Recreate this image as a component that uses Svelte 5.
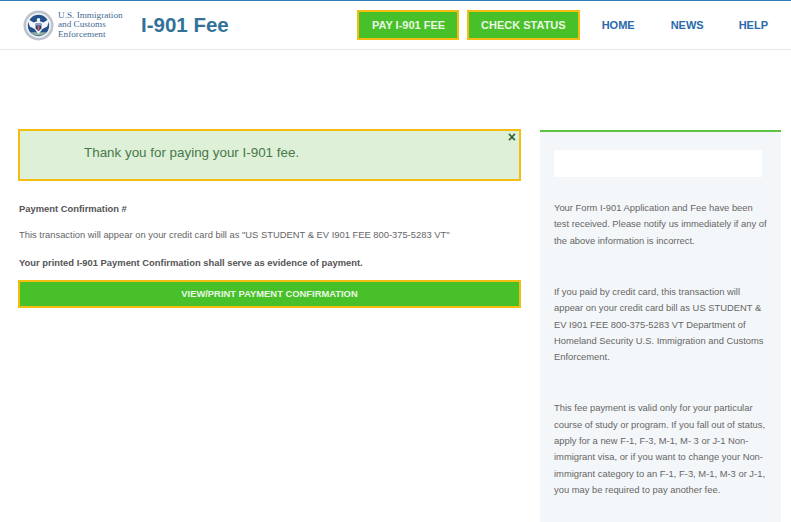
<script>
  const nav = ["HOME", "NEWS", "HELP"];
  const notes = [
    [
      "Your Form I-901 Application and Fee have been",
      "test received. Please notify us immediately if any of",
      "the above information is incorrect."
    ],
    [
      "If you paid by credit card, this transaction will",
      "appear on your credit card bill as US STUDENT &",
      "EV I901 FEE 800-375-5283 VT Department of",
      "Homeland Security U.S. Immigration and Customs",
      "Enforcement."
    ],
    [
      "This fee payment is valid only for your particular",
      "course of study or program. If you fall out of status,",
      "apply for a new F-1, F-3, M-1, M- 3 or J-1 Non-",
      "immigrant visa, or if you want to change your Non-",
      "immigrant category to an F-1, F-3, M-1, M-3 or J-1,",
      "you may be required to pay another fee."
    ]
  ];
</script>

<div class="page">
  <header>
    <div class="brand">
      <svg class="seal" width="31" height="31" viewBox="0 0 32 32">
        <circle cx="16" cy="16" r="15.5" fill="#bcc3cb" />
        <circle cx="16" cy="16" r="12.8" fill="#f1f3f5" />
        <circle cx="16" cy="16" r="11" fill="#24508c" />
        <path d="M8 23 A11 11 0 0 0 24 23 Z" fill="#8fb0a0" />
        <path d="M4.5 9 L11 13 L16 11 L21 13 L27.5 9 L25 17 L20 19.5 L16 25 L12 19.5 L7 17 Z" fill="#f5f7fa" />
        <path d="M13 14 H19 V19 L16 22 L13 19 Z" fill="#1f3f73" />
        <path d="M13 14 H19 V16 H13 Z" fill="#86a8cc" />
        <path d="M15 16 H17 V21 H15 Z" fill="#c9605c" />
        <circle cx="16" cy="10" r="1.8" fill="#f5f7fa" />
      </svg>
      <div class="agency">U.S. Immigration<br />and Customs<br />Enforcement</div>
      <div class="title">I-901 Fee</div>
    </div>
    <nav>
      <a class="cta" href="#pay">PAY I-901 FEE</a>
      <a class="cta" href="#status">CHECK STATUS</a>
      {#each nav as item}
        <a class="link" href="#{item}">{item}</a>
      {/each}
    </nav>
  </header>

  <main>
    <section class="content">
      <div class="alert">
        <span class="msg">Thank you for paying your I-901 fee.</span>
        <span class="close">×</span>
      </div>
      <p class="strong first">Payment Confirmation #</p>
      <p>This transaction will appear on your credit card bill as "US STUDENT &amp; EV I901 FEE 800-375-5283 VT"</p>
      <p class="strong last">Your printed I-901 Payment Confirmation shall serve as evidence of payment.</p>
      <a class="print" href="#print">VIEW/PRINT PAYMENT CONFIRMATION</a>
    </section>

    <aside>
      <div class="blank"></div>
      {#each notes as lines}
        <p>
          {#each lines as line}
            <span>{line}</span>
          {/each}
        </p>
      {/each}
    </aside>
  </main>
</div>

<style>
  :global(body) {
    margin: 0;
    background: #fff;
    font-family: "Liberation Sans", Arial, sans-serif;
  }
  .page {
    width: 791px;
    height: 522px;
    overflow: hidden;
  }
  header {
    height: 50px;
    box-sizing: border-box;
    border-top: 1px solid #337ab7;
    border-bottom: 1px solid #e7e7e7;
    display: flex;
    justify-content: space-between;
    align-items: center;
    padding: 0 0 0 23px;
  }
  .brand {
    display: flex;
    align-items: center;
  }
  .agency {
    font-family: "Liberation Serif", serif;
    font-size: 9.2px;
    line-height: 9.5px;
    color: #3f6a93;
    margin-left: 4px;
    width: 83px;
  }
  .title {
    font-size: 20.5px;
    font-weight: bold;
    color: #337298;
  }
  nav {
    display: flex;
    align-items: center;
  }
  nav a {
    font-size: 11px;
    font-weight: bold;
    text-decoration: none;
  }
  .cta {
    background: #48c02a;
    border: 2px solid #f4bd12;
    color: #e9f7e4;
    height: 30px;
    line-height: 26px;
    box-sizing: border-box;
    padding: 0 12px;
    margin-right: 8px;
  }
  .cta:first-child {
    padding-left: 13px;
  }
  .cta + .link {
    margin-left: 14px;
  }
  .link {
    color: #2a69ab;
    margin-right: 36px;
  }
  .link:nth-child(4) {
    margin-right: 35px;
  }
  .link:last-child {
    margin-right: 23px;
  }
  main {
    display: flex;
    align-items: flex-start;
    gap: 19px;
    padding: 79px 10px 0 18px;
  }
  .content {
    width: 503px;
    flex: none;
    color: #666;
    font-size: 9.4px;
  }
  .alert {
    position: relative;
    height: 52px;
    box-sizing: border-box;
    background: #dff0d8;
    border: 2px solid #f4bd12;
    padding: 11px 0 0 64px;
    color: #47784a;
    font-size: 13.4px;
    line-height: 22px;
  }
  .close {
    position: absolute;
    top: 0;
    right: 3px;
    font-size: 14px;
    line-height: 13px;
    font-weight: bold;
    color: #2f5f3a;
  }
  .content p {
    margin: 0 0 0 1px;
    padding-top: 13px;
    line-height: 13px;
  }
  .content p.first {
    padding-top: 21px;
  }
  .content p.last {
    padding-top: 15px;
  }
  .strong {
    font-weight: bold;
    color: #555;
  }
  .print {
    display: block;
    margin-top: 11px;
    height: 28px;
    box-sizing: border-box;
    background: #48c02a;
    border: 2px solid #f4bd12;
    color: #e9f7e4;
    font-weight: bold;
    font-size: 9.4px;
    line-height: 24px;
    text-align: center;
    text-decoration: none;
  }
  aside {
    width: 241px;
    flex: none;
    height: 392px;
    margin-top: 1px;
    box-sizing: border-box;
    background: #f4f7f9;
    border-top: 2px solid #5cc23f;
    padding: 18px 10px 18px 14px;
    color: #666;
    font-size: 9.4px;
    line-height: 16.4px;
  }
  .blank {
    width: 208px;
    height: 27px;
    background: #fff;
    margin-bottom: 23px;
  }
  aside p {
    margin: 0 0 34.5px;
  }
  aside span {
    display: block;
    white-space: nowrap;
  }
</style>
